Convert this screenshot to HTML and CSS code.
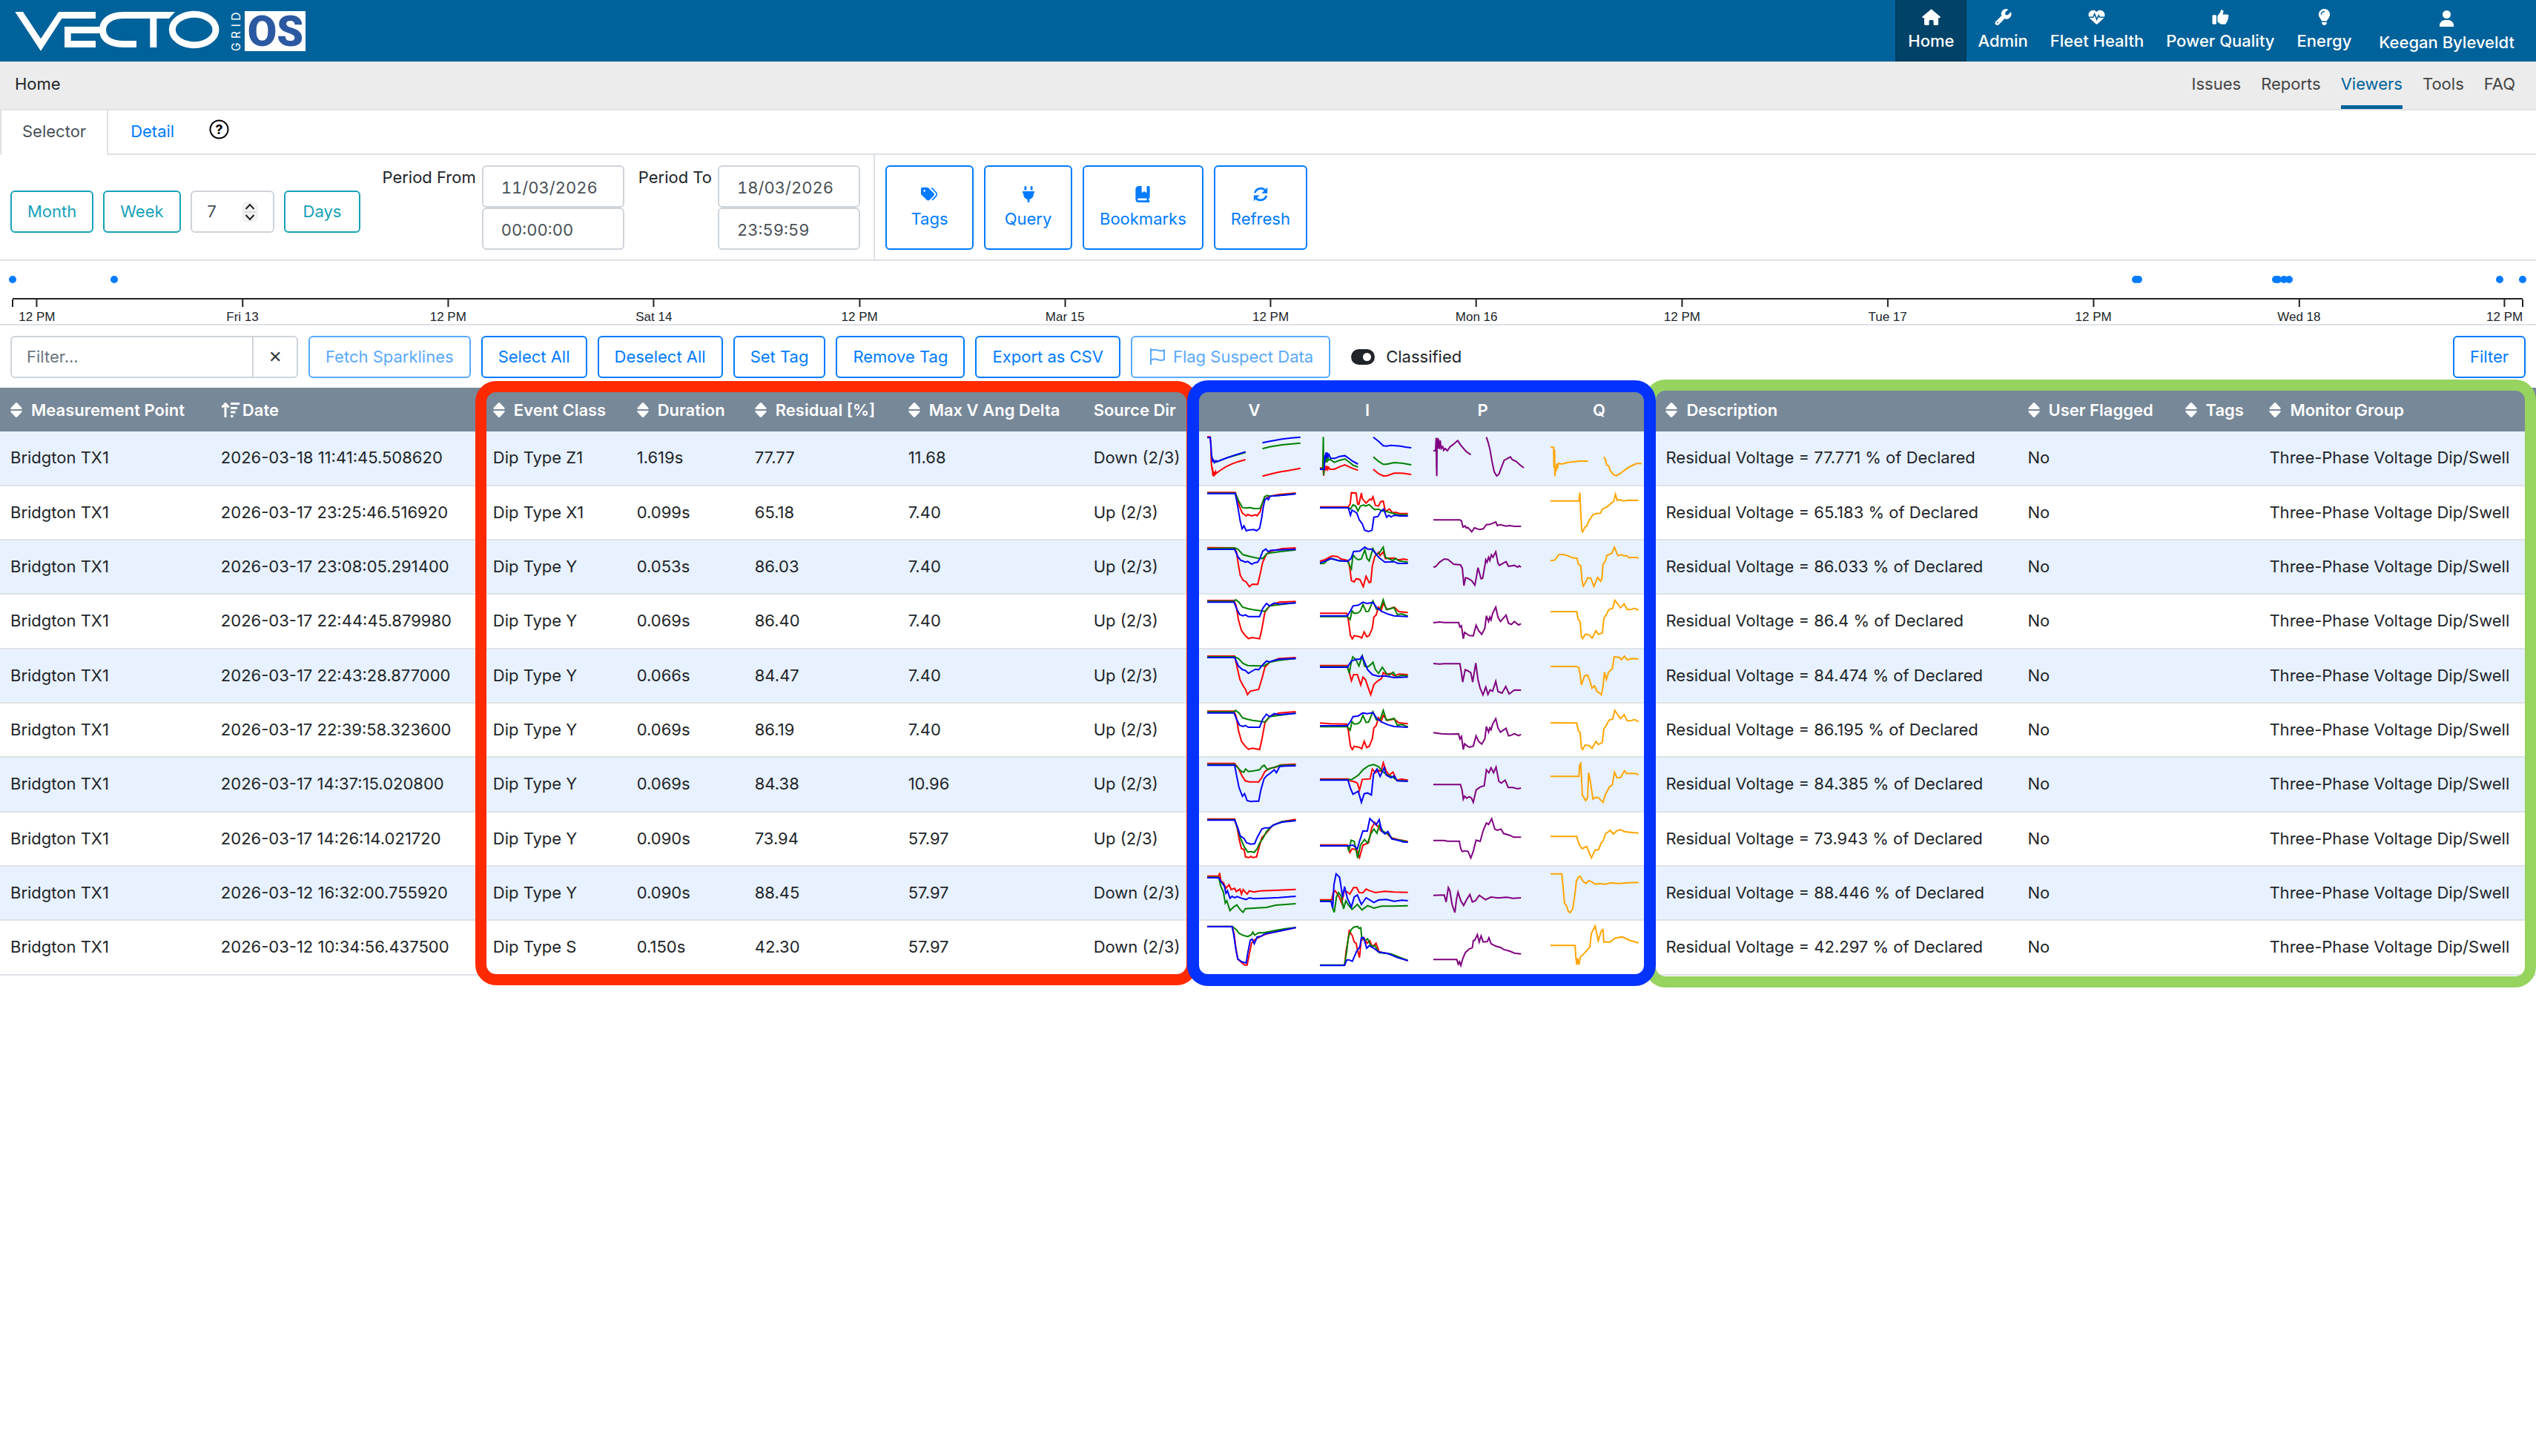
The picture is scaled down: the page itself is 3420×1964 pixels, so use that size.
FILE: index.html
```html
<!DOCTYPE html>
<html lang="en">
<head>
<meta charset="utf-8">
<title>Vecto Grid OS - Viewers</title>
<link rel="stylesheet" href="styles.css">
</head>
<body>
<svg class="defs" aria-hidden="true">
  <symbol id="sort" viewBox="0 0 16 20"><path d="M8 0Q9 0 9.600 1L15.200 7Q16.500 9 14.500 9H1.500Q-.5 9 .8 7L6.400 1Q7 0 8 0zM8 20Q9 20 9.600 19L15.200 13Q16.500 11 14.500 11H1.500Q-.5 11 .8 13L6.400 19Q7 20 8 20z"/></symbol>
</svg>
<header class="topbar">
  <a class="brand" href="#" aria-label="Vecto Grid OS">
    <svg class="logo" viewBox="0 0 1290 249">
      <g fill="#fff">
        <path d="M61 48H93L165 157L237 48H387V75H250L165 206z"/>
        <path d="M405 108H261V192H387V165H287V135H405z"/>
        <path d="M708 48H500C430 48 402 85 402 121C402 160 430 192 500 192H552V165H500C455 165 429 150 429 121C429 95 455 75 500 75H607V192H634V75H684z"/>
        <ellipse cx="785" cy="120" rx="88" ry="62" fill="none" stroke="#fff" stroke-width="27"/>
        <rect x="990" y="45" width="246" height="162"/>
        <text class="logo-grid" transform="translate(971 207) rotate(-90)" x="0 51 98 124" y="0">GRID</text>
      </g>
      <text class="logo-os" x="1001" y="187">OS</text>
    </svg>
  </a>
  <nav class="mainnav">
    <a class="on" href="#"><svg viewBox="0 0 25 22"><path d="M12.500 .2L24.600 10.600Q25.200 12 23.800 12.300H22V20.500Q22 22 20.500 22H16.500Q15.500 22 15.500 21V16.500Q15.500 15 14 15H11Q9.500 15 9.500 16.500V21Q9.500 22 8.500 22H4.500Q3 22 3 20.500V12.300H1.200Q-.2 12 .4 10.600z"/></svg>Home</a>
    <a href="#"><svg viewBox="0 0 512 512"><path fill-rule="evenodd" d="M352 320c88.400 0 160-71.600 160-160c0-15.300-2.200-30.100-6.200-44.200c-3.100-10.800-16.400-13.200-24.300-5.300l-76.800 76.800c-3 3-7.100 4.700-11.300 4.700H336c-8.800 0-16-7.200-16-16V118.600c0-4.200 1.700-8.300 4.700-11.300l76.800-76.800c7.900-7.900 5.400-21.200-5.300-24.300C382.100 2.200 367.300 0 352 0C263.600 0 192 71.600 192 160c0 19.100 3.400 37.500 9.500 54.500L19.900 396.100C7.200 408.800 0 426.100 0 444.100C0 481.600 30.400 512 67.900 512c18 0 35.300-7.200 48-19.900L297.500 310.500c17 6.200 35.400 9.500 54.500 9.500zM80 408a24 24 0 1 1 0 48 24 24 0 1 1 0-48z"/></svg>Admin</a>
    <a href="#"><svg viewBox="0 0 512 512"><path d="M47.600 300.400L228.300 469.100c7.500 7 17.400 10.900 27.700 10.900s20.200-3.900 27.700-10.900L464.400 300.400c30.400-28.300 47.600-68 47.600-109.500v-5.800c0-69.900-50.500-129.500-119.400-141C347 36.500 300.600 51.400 268 84L256 96 244 84c-32.600-32.600-79-47.500-124.600-39.900C50.500 55.600 0 115.200 0 185.100v5.800c0 41.500 17.200 81.200 47.600 109.500z"/><path class="pulse" d="M-10 262H145L190 160L260 330L318 205L350 262H522"/></svg>Fleet Health</a>
    <a href="#"><svg viewBox="0 0 512 512"><path d="M313.400 32.900c26 5.200 42.900 30.500 37.700 56.500l-2.300 11.400c-5.300 26.700-15.100 52.100-28.800 75.200H464c26.500 0 48 21.500 48 48c0 18.500-10.500 34.600-25.900 42.600C497 275.400 504 288.900 504 304c0 23.400-16.800 42.900-38.900 47.100c4.400 7.300 6.900 15.800 6.900 24.900c0 21.300-13.900 39.400-33.100 45.600c.7 3.300 1.100 6.800 1.100 10.400c0 26.500-21.500 48-48 48H294.500c-19 0-37.500-5.600-53.300-16.100l-38.500-25.700C176 420.400 160 390.400 160 358.300V320 272 247.100c0-29.200 13.300-56.700 36-75l7.400-5.900c26.500-21.200 44.600-51 51.200-84.200l2.300-11.400c5.200-26 30.500-42.900 56.500-37.700zM32 192H96c17.700 0 32 14.300 32 32V448c0 17.700-14.300 32-32 32H32c-17.700 0-32-14.300-32-32V224c0-17.700 14.300-32 32-32z"/></svg>Power Quality</a>
    <a href="#"><svg viewBox="0 0 384 512"><path fill-rule="evenodd" d="M272 384c9.600-31.900 29.500-59.100 49.200-86.200c5.200-7.100 10.400-14.200 15.400-21.400c19.800-28.500 31.400-63 31.400-100.300C368 78.800 289.200 0 192 0S16 78.800 16 176c0 37.300 11.600 71.900 31.400 100.300c5 7.200 10.200 14.300 15.400 21.400c19.800 27.100 39.700 54.400 49.200 86.200H272zM192 512c44.200 0 80-35.800 80-80V416H112v16c0 44.200 35.800 80 80 80zM112 176c0 8.800-7.200 16-16 16s-16-7.200-16-16c0-61.900 50.100-112 112-112c8.800 0 16 7.200 16 16s-7.200 16-16 16c-44.200 0-80 35.800-80 80z"/></svg>Energy</a>
    <a class="user" href="#"><svg viewBox="0 0 448 512"><circle cx="224" cy="128" r="128"/><path d="M178.300 304C79.800 304 0 383.800 0 482.300C0 498.700 13.300 512 29.700 512H418.300c16.400 0 29.700-13.300 29.700-29.700C448 383.800 368.200 304 269.700 304H178.300z"/></svg>Keegan Byleveldt</a>
  </nav>
</header>
<div class="subbar">
  <span class="crumb">Home</span>
  <nav class="subnav"><a href="#">Issues</a><a href="#">Reports</a><a class="on" href="#">Viewers</a><a href="#">Tools</a><a href="#">FAQ</a></nav>
</div>
<nav class="tabs">
  <a class="tab on" href="#">Selector</a>
  <a class="tab" href="#">Detail</a>
  <button class="help" type="button" aria-label="Help"><svg viewBox="0 0 27 27"><circle cx="13.500" cy="13.500" r="12"/><text x="13.500" y="20">?</text></svg></button>
</nav>
<form class="period">
  <div class="ranges">
    <button class="btn teal" type="button">Month</button>
    <button class="btn teal" type="button">Week</button>
    <div class="number">
      <input id="days" type="number" value="7" aria-label="Number of days">
      <svg viewBox="0 0 22 28"><rect width="22" height="28" rx="7"/><path class="mid" d="M3 14H19"/><path d="M5.500 10L11 4L16.500 10M5.500 18L11 24L16.500 18"/></svg>
    </div>
    <button class="btn teal wide" type="button">Days</button>
    <div class="moment">
      <label for="from">Period From</label>
      <div class="stack"><input id="from" type="text" value="11/03/2026"><input type="text" value="00:00:00" aria-label="Time from"></div>
    </div>
    <div class="moment">
      <label for="to">Period To</label>
      <div class="stack"><input id="to" type="text" value="18/03/2026"><input type="text" value="23:59:59" aria-label="Time to"></div>
    </div>
  </div>
  <div class="actions">
    <button class="btn tall" type="button"><svg viewBox="0 0 576 512"><path fill-rule="evenodd" d="M0 80V229.500c0 17 6.700 33.300 18.700 45.300l168 168c25 25 65.500 25 90.500 0L410.700 309.300c25-25 25-65.500 0-90.500l-168-168c-12-12-28.300-18.700-45.300-18.700H48C21.500 32 0 53.500 0 80zm112 32a32 32 0 1 1 0 64 32 32 0 1 1 0-64z"/><path class="edge" d="M345 50L485 195Q530 255 485 320L365 445"/></svg>Tags</button>
    <button class="btn tall" type="button"><svg viewBox="0 0 384 512"><path d="M96 0C78.300 0 64 14.300 64 32v96h64V32c0-17.700-14.300-32-32-32zM288 0c-17.700 0-32 14.300-32 32v96h64V32c0-17.700-14.300-32-32-32zM32 160c-17.700 0-32 14.300-32 32s14.300 32 32 32v32c0 77.400 55 142 128 156.800V480c0 17.700 14.300 32 32 32s32-14.300 32-32V412.800C297 398 352 333.400 352 256V224c17.700 0 32-14.300 32-32s-14.300-32-32-32H32z"/></svg>Query</button>
    <button class="btn tall" type="button"><svg viewBox="0 0 448 512"><path fill-rule="evenodd" d="M0 96C0 43 43 0 96 0h96V190.700c0 13.400 15.500 20.900 26 12.500L272 160l54 43.200c10.500 8.400 26 .9 26-12.500V0h64c17.700 0 32 14.300 32 32V352c0 17.700-14.300 32-32 32v64c17.700 0 32 14.300 32 32s-14.300 32-32 32H96c-53 0-96-43-96-96V96zM64 416c0 17.700 14.300 32 32 32H352V384H96c-17.700 0-32 14.300-32 32z"/></svg>Bookmarks</button>
    <button class="btn tall" type="button"><svg viewBox="0 0 24 24"><path class="arc" d="M3.500 10A9 9 0 0 1 19 6.500M20.500 14A9 9 0 0 1 5 17.500"/><path d="M22 2V10.500H13.500zM2 22V13.500H10.500z"/></svg>Refresh</button>
  </div>
</form>
<section class="timeline" aria-label="Event timeline">
  <div class="dots">
    <i style="left:0%"></i><i style="left:4.05%"></i><i style="left:84.58%"></i><i style="left:84.69%"></i><i style="left:90.17%"></i><i style="left:90.26%"></i><i style="left:90.5%"></i><i style="left:90.7%"></i><i style="left:99.09%"></i><i style="left:100%"></i>
  </div>
  <div class="axis">
    <span style="left:.97%">12 PM</span><span style="left:9.16%">Fri 13</span><span style="left:17.35%">12 PM</span><span style="left:25.55%">Sat 14</span><span style="left:33.74%">12 PM</span><span style="left:41.93%">Mar 15</span><span style="left:50.12%">12 PM</span><span style="left:58.32%">Mon 16</span><span style="left:66.51%">12 PM</span><span style="left:74.7%">Tue 17</span><span style="left:82.9%">12 PM</span><span style="left:91.09%">Wed 18</span><span style="left:99.28%">12 PM</span>
  </div>
</section>
<div class="toolbar">
  <div class="search"><input type="text" placeholder="Filter..." aria-label="Filter"><button type="button" aria-label="Clear filter">✕</button></div>
  <button class="btn" type="button" disabled>Fetch Sparklines</button>
  <button class="btn" type="button">Select All</button>
  <button class="btn" type="button">Deselect All</button>
  <button class="btn" type="button">Set Tag</button>
  <button class="btn" type="button">Remove Tag</button>
  <button class="btn" type="button">Export as CSV</button>
  <button class="btn flag" type="button" disabled><svg viewBox="0 0 20 22"><path d="M1 0V22M1 3Q5 1 10 2.500T19 2.500V15Q15 17 10 15T1 16"/></svg>Flag Suspect Data</button>
  <label class="toggle"><input type="checkbox" checked>Classified</label>
  <button class="btn last" type="button">Filter</button>
</div>
<div class="results">
<table>
  <colgroup><col class="c-point"><col class="c-date"><col class="c-class"><col class="c-dur"><col class="c-res"><col class="c-ang"><col class="c-dir"><col class="c-v"><col class="c-i"><col class="c-p"><col class="c-q"><col class="c-desc"><col class="c-flag"><col class="c-tags"><col></colgroup>
  <thead><tr>
    <th><button type="button"><svg class="sort"><use href="#sort"/></svg>Measurement Point</button></th>
    <th><button class="dated" type="button"><svg class="sorted" viewBox="0 0 25 20"><path d="M6 20V3M1.500 6.500L6 1.500L10.500 6.500M13 1.500H25M13 7.500H22M13 13H19.500M13 18.500H16.500"/></svg>Date</button></th>
    <th><button type="button"><svg class="sort"><use href="#sort"/></svg>Event Class</button></th>
    <th><button type="button"><svg class="sort"><use href="#sort"/></svg>Duration</button></th>
    <th><button type="button"><svg class="sort"><use href="#sort"/></svg>Residual [%]</button></th>
    <th><button type="button"><svg class="sort"><use href="#sort"/></svg>Max V Ang Delta</button></th>
    <th>Source Dir</th><th class="mid">V</th><th class="mid">I</th><th class="mid">P</th><th class="mid">Q</th>
    <th><button type="button"><svg class="sort"><use href="#sort"/></svg>Description</button></th>
    <th><button type="button"><svg class="sort"><use href="#sort"/></svg>User Flagged</button></th>
    <th><button type="button"><svg class="sort"><use href="#sort"/></svg>Tags</button></th>
    <th><button type="button"><svg class="sort"><use href="#sort"/></svg>Monitor Group</button></th>
  </tr></thead>
  <tbody>
  <tr><td>Bridgton TX1</td><td>2026-03-18 11:41:45.508620</td><td>Dip Type Z1</td><td>1.619s</td><td>77.77</td><td>11.68</td><td>Down (2/3)</td>
    <td><svg class="spark" viewBox="90 264 309 180" preserveAspectRatio="none"><polyline class="r" points="90,271 99,271 102,300 103,375 106,405 107,395 108,428 109,408 111,431 113,412 115,426 117,412 119,418 130,408 150,392 170,380 190,371 213,363"/><polyline class="r" points="267,430 295,421 320,413 350,407 389,398"/><polyline class="g" points="103,340 108,370 117,373 160,353 213,334"/><polyline class="g" points="267,319 290,311 330,303 389,296"/><polyline class="b" points="90,274 100,274 104,345 107,368 110,364 113,375 118,367 122,371 150,357 180,344 213,331"/><polyline class="b" points="267,295 290,289 330,280 360,275 389,272"/></svg></td>
    <td><svg class="spark" viewBox="452 264 309 180" preserveAspectRatio="none"><polyline class="r" points="452,397 462,397 464,428 467,388 468,408 470,389 472,405 474,388 477,403 480,394 484,402 498,402 515,392 532,384 550,395 574,406"/><polyline class="r" points="623,402 640,420 655,429 665,429 690,418 715,418 745,423"/><polyline class="g" points="452,400 461,400 463,271 464,425 467,350 470,375 472,350 475,374 477,352 480,365 485,362 498,374 515,366 532,360 545,372 558,385 574,393"/><polyline class="g" points="623,352 640,370 655,382 665,382 690,375 715,377 745,384"/><polyline class="b" points="452,402 466,402 468,345 469,365 471,334 473,355 476,334 478,350 481,343 486,357 500,358 515,350 532,347 545,358 556,369 574,381"/><polyline class="b" points="623,272 640,289 655,307 665,308 680,305 710,308 725,312 745,315"/></svg></td>
    <td><svg class="spark" viewBox="815 264 309 180" preserveAspectRatio="none"><polyline class="p" points="815,327 822,327 824,275 825,388 826,430 827,275 829,318 831,278 834,320 837,285 840,318 845,310 848,325 853,318 860,327 868,312 880,300 893,286 903,305 920,330 935,343"/><polyline class="p" points="985,272 991,295 997,325 1003,370 1010,412 1018,429 1025,422 1033,395 1042,366 1052,359 1062,352 1068,363 1080,370 1095,387 1105,396"/></svg></td>
    <td><svg class="spark" viewBox="1189 264 309 180" preserveAspectRatio="none"><polyline class="o" points="1189,313 1199,313 1200,395 1202,322 1203,430 1205,398 1207,410 1209,380 1211,400 1214,378 1225,381 1245,374 1280,369 1309,369"/><polyline class="o" points="1360,352 1365,362 1369,385 1376,389 1380,407 1392,425 1400,428 1412,420 1425,407 1445,390 1465,379 1481,379"/></svg></td>
    <td>Residual Voltage = 77.771 % of Declared</td><td>No</td><td></td><td>Three-Phase Voltage Dip/Swell</td></tr>
  <tr><td>Bridgton TX1</td><td>2026-03-17 23:25:46.516920</td><td>Dip Type X1</td><td>0.099s</td><td>65.18</td><td>7.40</td><td>Up (2/3)</td>
    <td><svg class="spark" viewBox="90 483 309 180" preserveAspectRatio="none"><polyline class="r" points="90,493 180,493 186,515 193,548 202,575 215,588 220,582 232,588 245,583 250,587 260,570 267,535 275,520 290,508 320,501 374,495"/><polyline class="g" points="90,496 180,496 190,525 203,554 215,556 228,554 240,558 260,557 267,535 274,510 282,505 290,508 320,505 374,497"/><polyline class="b" points="90,497 180,497 188,550 196,610 202,640 208,628 215,648 223,645 240,643 248,648 258,638 264,600 270,550 275,522 282,515 286,522 292,508 340,503 374,499"/></svg></td>
    <td><svg class="spark" viewBox="452 483 309 180" preserveAspectRatio="none"><polyline class="r" points="452,551 543,551 549,540 553,494 568,495 573,540 577,541 585,495 588,518 600,536 612,520 617,523 622,510 630,545 640,548 647,530 655,528 662,570 675,560 685,575 695,573 708,578 734,578"/><polyline class="g" points="452,554 543,554 550,560 558,543 566,547 574,568 582,548 592,543 598,548 610,542 620,555 628,562 640,560 650,568 660,568 680,575 700,582 734,584"/><polyline class="b" points="452,555 543,555 550,585 555,564 570,576 578,603 588,620 595,645 607,651 619,646 625,593 638,590 648,568 656,560 666,593 673,585 680,592 690,585 710,588 734,588"/></svg></td>
    <td><svg class="spark" viewBox="815 483 309 180" preserveAspectRatio="none"><polyline class="p" points="815,604 900,604 905,608 910,633 917,628 920,636 926,635 938,652 947,636 963,643 975,640 985,623 997,622 1015,612 1020,627 1030,623 1048,629 1060,627 1075,630 1096,630"/></svg></td>
    <td><svg class="spark" viewBox="1189 483 309 180" preserveAspectRatio="none"><polyline class="o" points="1189,527 1280,527 1283,493 1286,580 1289,645 1292,652 1300,632 1305,630 1313,605 1325,583 1335,578 1349,577 1355,560 1370,552 1382,538 1392,528 1397,500 1403,525 1412,522 1422,527 1440,524 1471,525"/></svg></td>
    <td>Residual Voltage = 65.183 % of Declared</td><td>No</td><td></td><td>Three-Phase Voltage Dip/Swell</td></tr>
  <tr><td>Bridgton TX1</td><td>2026-03-17 23:08:05.291400</td><td>Dip Type Y</td><td>0.053s</td><td>86.03</td><td>7.40</td><td>Up (2/3)</td>
    <td><svg class="spark" viewBox="90 702 309 180" preserveAspectRatio="none"><polyline class="r" points="90,716 178,717 184,735 190,785 196,828 205,848 215,855 225,874 235,864 252,865 260,822 268,775 280,742 295,730 330,720 374,717"/><polyline class="g" points="90,720 178,718 188,722 205,745 230,753 250,758 268,760 280,742 290,738 320,733 374,725"/><polyline class="b" points="90,723 178,723 188,752 198,768 205,770 212,775 220,772 233,783 240,778 252,775 260,758 268,730 278,722 285,732 295,727 320,725 374,723"/></svg></td>
    <td><svg class="spark" viewBox="452 702 309 180" preserveAspectRatio="none"><polyline class="r" points="452,771 468,765 490,750 508,752 520,762 543,768 548,800 553,850 562,855 568,842 580,845 591,874 600,832 610,858 615,855 620,790 628,752 640,735 645,748 655,733 662,760 690,758 705,766 720,762 734,766"/><polyline class="g" points="452,781 465,780 475,768 490,760 515,770 540,770 548,790 553,802 558,745 568,760 575,765 585,762 596,725 603,760 610,770 622,720 632,745 642,738 655,714 662,755 685,768 695,760 705,770 734,775"/><polyline class="b" points="452,778 470,770 485,760 510,768 540,772 552,760 560,732 580,730 596,714 605,722 618,722 628,735 640,755 660,775 690,773 702,780 734,780"/></svg></td>
    <td><svg class="spark" viewBox="815 702 309 180" preserveAspectRatio="none"><polyline class="p" points="815,795 822,793 835,775 850,762 862,764 880,783 902,786 908,800 913,870 918,838 925,840 938,850 948,868 953,835 958,797 968,842 973,840 980,790 983,765 987,775 992,755 996,768 1001,745 1006,755 1015,733 1022,778 1027,788 1040,778 1048,773 1056,792 1075,788 1085,795 1090,790 1096,795"/></svg></td>
    <td><svg class="spark" viewBox="1189 702 309 180" preserveAspectRatio="none"><polyline class="o" points="1189,769 1202,767 1215,745 1225,743 1240,747 1260,757 1274,759 1278,783 1286,790 1290,850 1294,872 1302,855 1308,838 1318,840 1328,873 1340,837 1350,852 1354,840 1357,785 1365,770 1370,747 1380,742 1386,738 1394,715 1405,748 1418,745 1425,750 1432,748 1440,757 1465,755 1471,760"/></svg></td>
    <td>Residual Voltage = 86.033 % of Declared</td><td>No</td><td></td><td>Three-Phase Voltage Dip/Swell</td></tr>
  <tr><td>Bridgton TX1</td><td>2026-03-17 22:44:45.879980</td><td>Dip Type Y</td><td>0.069s</td><td>86.40</td><td>7.40</td><td>Up (2/3)</td>
    <td><svg class="spark" viewBox="90 924 309 180" preserveAspectRatio="none"><polyline class="r" points="90,933 176,933 183,955 190,1010 200,1055 212,1075 222,1087 235,1083 258,1088 265,1050 275,980 290,955 320,940 374,937"/><polyline class="g" points="90,936 176,936 181,930 192,940 203,960 220,966 235,970 260,974 275,977 290,955 320,950 374,942"/><polyline class="b" points="90,940 176,940 184,965 194,990 205,995 212,991 222,998 258,998 268,965 280,945 290,955 305,943 320,947 374,943"/></svg></td>
    <td><svg class="spark" viewBox="452 924 309 180" preserveAspectRatio="none"><polyline class="r" points="452,985 538,985 543,1010 550,1075 556,1088 562,1075 580,1080 586,1085 594,1060 602,1080 610,1075 620,1045 625,1000 632,992 640,960 648,975 655,945 668,970 690,960 705,978 734,982"/><polyline class="g" points="452,998 540,998 549,1010 555,975 562,985 575,983 582,975 590,950 600,978 608,977 622,935 633,968 645,968 655,930 665,970 690,962 700,990 715,987 734,996"/><polyline class="b" points="452,995 540,995 550,975 558,955 575,952 590,940 603,945 622,941 635,963 650,977 670,988 690,995 734,998"/></svg></td>
    <td><svg class="spark" viewBox="815 924 309 180" preserveAspectRatio="none"><polyline class="p" points="815,1023 835,1020 850,1022 896,1022 900,1040 905,1035 911,1088 915,1062 922,1068 930,1075 943,1076 952,1033 960,1055 970,1070 980,1045 985,995 992,1018 996,1000 1000,1012 1005,985 1015,960 1022,1000 1030,1018 1048,992 1056,1025 1065,1030 1075,1018 1088,1032 1096,1027"/></svg></td>
    <td><svg class="spark" viewBox="1189 924 309 180" preserveAspectRatio="none"><polyline class="o" points="1189,978 1273,978 1278,1010 1284,1018 1288,1080 1292,1088 1300,1070 1313,1072 1322,1085 1335,1055 1342,1070 1355,1065 1360,1005 1368,990 1376,970 1388,965 1395,932 1405,948 1413,963 1425,947 1435,970 1445,970 1458,965 1471,972"/></svg></td>
    <td>Residual Voltage = 86.4 % of Declared</td><td>No</td><td></td><td>Three-Phase Voltage Dip/Swell</td></tr>
  <tr><td>Bridgton TX1</td><td>2026-03-17 22:43:28.877000</td><td>Dip Type Y</td><td>0.066s</td><td>84.47</td><td>7.40</td><td>Up (2/3)</td>
    <td><svg class="spark" viewBox="90 1143 309 180" preserveAspectRatio="none"><polyline class="r" points="90,1155 178,1155 185,1195 195,1250 205,1275 213,1290 219,1311 228,1297 255,1290 265,1248 275,1200 290,1180 320,1165 374,1161"/><polyline class="g" points="90,1158 178,1158 190,1165 205,1185 220,1193 255,1195 272,1195 290,1180 320,1172 374,1165"/><polyline class="b" points="90,1161 178,1161 190,1195 203,1210 212,1213 222,1225 235,1215 245,1208 255,1210 268,1190 280,1175 290,1178 305,1172 320,1168 374,1165"/></svg></td>
    <td><svg class="spark" viewBox="452 1143 309 180" preserveAspectRatio="none"><polyline class="r" points="452,1193 540,1193 547,1225 553,1255 560,1230 572,1230 583,1272 590,1240 598,1250 606,1280 615,1311 625,1270 638,1255 650,1245 655,1222 665,1230 680,1225 690,1235 705,1228 734,1230"/><polyline class="g" points="452,1198 540,1198 546,1225 551,1190 557,1158 567,1168 577,1195 588,1155 595,1195 603,1200 615,1190 622,1180 630,1210 640,1225 652,1200 665,1225 675,1232 687,1220 697,1240 715,1233 734,1235"/><polyline class="b" points="452,1200 540,1200 553,1175 570,1168 580,1168 587,1155 597,1185 605,1210 620,1230 640,1237 660,1235 690,1242 734,1240"/></svg></td>
    <td><svg class="spark" viewBox="815 1143 309 180" preserveAspectRatio="none"><polyline class="p" points="815,1185 835,1187 850,1186 900,1186 904,1215 909,1260 917,1210 926,1215 935,1222 941,1260 951,1183 958,1250 965,1285 974,1312 983,1280 990,1310 997,1292 1005,1297 1015,1257 1022,1298 1035,1305 1047,1278 1058,1308 1075,1292 1096,1293"/></svg></td>
    <td><svg class="spark" viewBox="1189 1143 309 180" preserveAspectRatio="none"><polyline class="o" points="1189,1197 1272,1197 1280,1203 1284,1230 1288,1272 1298,1235 1308,1232 1315,1255 1322,1285 1330,1275 1338,1298 1344,1302 1352,1312 1357,1280 1362,1220 1368,1250 1375,1220 1387,1205 1393,1158 1410,1160 1416,1170 1426,1155 1435,1170 1450,1165 1471,1167"/></svg></td>
    <td>Residual Voltage = 84.474 % of Declared</td><td>No</td><td></td><td>Three-Phase Voltage Dip/Swell</td></tr>
  <tr><td>Bridgton TX1</td><td>2026-03-17 22:39:58.323600</td><td>Dip Type Y</td><td>0.069s</td><td>86.19</td><td>7.40</td><td>Up (2/3)</td>
    <td><svg class="spark" viewBox="90 917 309 180" preserveAspectRatio="none"><polyline class="r" points="90,933 176,933 183,955 190,1010 200,1055 212,1075 222,1087 235,1083 258,1088 265,1050 275,980 290,955 320,940 374,935"/><polyline class="g" points="90,936 176,936 181,930 192,940 203,960 220,966 235,970 260,974 275,977 290,955 320,950 374,941"/><polyline class="b" points="90,940 176,940 184,965 194,990 205,995 212,991 222,998 258,998 268,965 280,945 290,955 305,943 320,947 374,942"/></svg></td>
    <td><svg class="spark" viewBox="452 917 309 180" preserveAspectRatio="none"><polyline class="r" points="452,981 485,984 538,985 543,1010 550,1075 556,1088 562,1075 580,1080 586,1085 594,1055 602,1080 610,1075 620,1045 625,1000 632,992 640,960 648,975 655,950 668,970 690,965 705,980 734,984"/><polyline class="g" points="452,996 540,996 549,1010 555,975 562,985 575,983 582,975 590,950 600,978 608,977 622,935 633,968 645,968 655,930 665,970 690,962 700,990 715,987 734,996"/><polyline class="b" points="452,992 540,992 550,975 558,955 575,952 590,940 603,943 622,939 635,963 650,977 670,988 690,995 734,998"/></svg></td>
    <td><svg class="spark" viewBox="815 917 309 180" preserveAspectRatio="none"><polyline class="p" points="815,1020 840,1024 860,1026 896,1025 900,1045 905,1035 911,1088 915,1065 922,1072 930,1079 943,1074 952,1033 960,1055 970,1066 980,1045 985,995 992,1018 996,1000 1000,1008 1005,985 1015,963 1022,1000 1030,1018 1048,1002 1056,1033 1065,1030 1075,1024 1088,1032 1096,1027"/></svg></td>
    <td><svg class="spark" viewBox="1189 917 309 180" preserveAspectRatio="none"><polyline class="o" points="1189,980 1273,981 1278,1010 1284,1020 1288,1080 1292,1088 1300,1070 1313,1072 1322,1083 1335,1055 1342,1068 1355,1060 1360,1005 1368,990 1376,970 1388,965 1395,930 1405,948 1413,963 1425,947 1435,972 1445,972 1458,967 1471,975"/></svg></td>
    <td>Residual Voltage = 86.195 % of Declared</td><td>No</td><td></td><td>Three-Phase Voltage Dip/Swell</td></tr>
  <tr><td>Bridgton TX1</td><td>2026-03-17 14:37:15.020800</td><td>Dip Type Y</td><td>0.069s</td><td>84.38</td><td>10.96</td><td>Up (2/3)</td>
    <td><svg class="spark" viewBox="90 384 309 180" preserveAspectRatio="none"><polyline class="r" points="90,392 178,392 190,412 202,443 212,463 225,467 255,467 265,450 275,425 290,412 310,408 325,398 374,395"/><polyline class="g" points="90,397 178,397 188,410 200,425 207,428 213,415 222,425 240,422 258,418 267,403 273,400 283,417 300,410 325,400 374,399"/><polyline class="b" points="90,400 178,400 184,440 192,490 203,525 210,515 218,543 230,547 240,545 255,545 262,500 272,455 280,443 292,432 305,418 312,430 322,405 340,403 374,402"/></svg></td>
    <td><svg class="spark" viewBox="452 384 309 180" preserveAspectRatio="none"><polyline class="r" points="452,455 542,455 550,463 565,467 572,472 579,500 588,457 613,455 620,415 630,430 640,420 648,425 655,390 665,425 675,440 686,427 698,460 715,456 734,460"/><polyline class="g" points="452,458 542,458 555,457 575,440 590,418 608,402 624,397 640,405 650,422 665,437 685,447 700,462 734,464"/><polyline class="b" points="452,460 542,460 549,490 558,517 575,505 585,550 594,515 605,512 617,520 624,435 635,415 645,445 658,410 665,440 680,450 690,443 700,463 734,464"/></svg></td>
    <td><svg class="spark" viewBox="815 384 309 180" preserveAspectRatio="none"><polyline class="p" points="815,478 902,478 907,500 911,537 915,525 922,533 930,527 937,532 943,550 952,500 965,488 978,483 985,418 993,430 1000,410 1008,430 1016,407 1025,465 1033,472 1045,460 1055,490 1070,490 1085,495 1096,492"/></svg></td>
    <td><svg class="spark" viewBox="1189 384 309 180" preserveAspectRatio="none"><polyline class="o" points="1189,445 1280,445 1282,400 1286,392 1291,520 1302,543 1308,530 1311,430 1316,460 1325,537 1332,530 1342,530 1357,550 1366,515 1378,487 1387,480 1394,428 1402,450 1413,450 1426,422 1433,433 1460,433 1471,438"/></svg></td>
    <td>Residual Voltage = 84.385 % of Declared</td><td>No</td><td></td><td>Three-Phase Voltage Dip/Swell</td></tr>
  <tr><td>Bridgton TX1</td><td>2026-03-17 14:26:14.021720</td><td>Dip Type Y</td><td>0.090s</td><td>73.94</td><td>57.97</td><td>Up (2/3)</td>
    <td><svg class="spark" viewBox="90 603 309 180" preserveAspectRatio="none"><polyline class="r" points="90,614 178,614 186,650 193,700 200,735 208,737 213,768 225,770 230,765 235,770 248,768 255,735 265,690 280,670 300,640 330,625 374,616"/><polyline class="g" points="90,617 178,617 188,655 196,690 208,725 220,748 232,746 240,750 250,735 258,712 270,690 280,665 300,640 330,625 374,620"/><polyline class="b" points="90,619 178,619 188,650 196,683 208,693 216,710 230,716 242,714 250,690 265,655 275,650 290,650 305,637 330,627 374,621"/></svg></td>
    <td><svg class="spark" viewBox="452 603 309 180" preserveAspectRatio="none"><polyline class="r" points="452,719 540,719 548,750 555,735 570,738 579,770 590,720 608,710 618,650 628,628 640,650 650,665 665,670 680,690 700,697 734,705"/><polyline class="g" points="452,722 540,722 545,745 552,700 562,705 573,773 582,720 595,697 605,712 615,675 625,655 635,672 642,640 655,665 672,675 685,695 720,703 734,708"/><polyline class="b" points="452,723 540,723 558,720 572,735 580,700 590,662 604,663 612,613 622,625 632,638 642,617 650,662 660,675 670,665 682,695 700,700 720,707 734,708"/></svg></td>
    <td><svg class="spark" viewBox="815 603 309 180" preserveAspectRatio="none"><polyline class="p" points="815,701 850,701 860,704 898,704 903,735 908,746 915,743 926,745 935,772 943,745 952,700 965,705 975,660 985,630 992,637 1002,613 1012,655 1020,660 1032,655 1040,673 1060,680 1072,688 1096,688"/></svg></td>
    <td><svg class="spark" viewBox="1189 603 309 180" preserveAspectRatio="none"><polyline class="o" points="1189,685 1273,685 1280,715 1290,735 1305,725 1320,772 1332,740 1343,738 1352,710 1357,705 1365,675 1380,660 1390,675 1402,662 1414,657 1425,665 1445,668 1471,671"/></svg></td>
    <td>Residual Voltage = 73.943 % of Declared</td><td>No</td><td></td><td>Three-Phase Voltage Dip/Swell</td></tr>
  <tr><td>Bridgton TX1</td><td>2026-03-12 16:32:00.755920</td><td>Dip Type Y</td><td>0.090s</td><td>88.45</td><td>57.97</td><td>Down (2/3)</td>
    <td><svg class="spark" viewBox="90 822 309 180" preserveAspectRatio="none"><polyline class="r" points="90,845 127,845 130,833 134,865 142,872 150,895 160,880 167,900 178,895 183,908 195,898 200,918 205,900 212,910 218,918 225,905 240,910 260,905 320,902 374,899"/><polyline class="g" points="90,850 127,850 133,885 142,910 148,955 153,945 163,985 175,970 185,962 195,980 205,992 212,977 240,975 280,972 310,963 374,957"/><polyline class="b" points="90,852 127,852 135,870 145,885 150,915 155,905 163,935 170,927 178,933 185,928 205,937 215,940 225,933 240,937 270,935 320,932 374,927"/></svg></td>
    <td><svg class="spark" viewBox="452 822 309 180" preserveAspectRatio="none"><polyline class="r" points="452,941 490,941 495,910 501,905 512,925 522,955 530,905 540,910 548,918 560,892 570,892 578,912 590,913 600,898 612,905 630,912 660,907 690,910 734,911"/><polyline class="g" points="452,945 488,945 493,975 498,992 505,930 512,912 520,925 528,978 535,945 545,965 555,980 572,960 587,982 605,965 625,975 650,967 690,967 734,965"/><polyline class="b" points="452,948 488,948 493,975 497,880 504,836 515,850 525,930 531,888 540,935 553,970 562,930 572,922 585,960 600,933 625,952 640,942 665,940 690,947 715,943 734,945"/></svg></td>
    <td><svg class="spark" viewBox="815 822 309 180" preserveAspectRatio="none"><polyline class="p" points="815,923 850,922 856,950 863,892 868,905 875,960 884,993 889,940 894,910 903,945 912,964 922,940 932,920 940,950 950,945 962,923 982,941 1000,930 1022,934 1050,931 1070,935 1096,933"/></svg></td>
    <td><svg class="spark" viewBox="1189 822 309 180" preserveAspectRatio="none"><polyline class="o" points="1189,836 1225,836 1230,900 1234,955 1240,965 1246,988 1252,993 1260,978 1266,930 1272,865 1278,850 1284,846 1294,868 1303,875 1312,863 1320,868 1332,878 1345,875 1365,878 1380,873 1410,875 1440,872 1471,871"/></svg></td>
    <td>Residual Voltage = 88.446 % of Declared</td><td>No</td><td></td><td>Three-Phase Voltage Dip/Swell</td></tr>
  <tr><td>Bridgton TX1</td><td>2026-03-12 10:34:56.437500</td><td>Dip Type S</td><td>0.150s</td><td>42.30</td><td>57.97</td><td>Down (2/3)</td>
    <td><svg class="spark" viewBox="90 1044 309 180" preserveAspectRatio="none"><polyline class="r" points="90,1052 170,1052 176,1080 182,1140 188,1185 200,1198 210,1208 218,1208 224,1170 232,1120 240,1108 250,1100 265,1090 280,1082 310,1073 374,1057"/><polyline class="g" points="90,1052 170,1052 183,1065 192,1080 205,1088 220,1093 232,1085 236,1075 242,1087 256,1077 270,1078 300,1070 340,1061 374,1056"/><polyline class="b" points="90,1053 170,1053 175,1085 182,1145 188,1183 200,1195 215,1200 220,1160 228,1108 234,1103 241,1122 250,1095 262,1092 275,1082 310,1074 374,1057"/></svg></td>
    <td><svg class="spark" viewBox="452 1044 309 180" preserveAspectRatio="none"><polyline class="r" points="452,1209 531,1209 536,1150 542,1110 546,1070 556,1090 562,1115 568,1120 573,1150 579,1178 584,1110 594,1100 603,1120 612,1110 620,1135 632,1120 642,1155 680,1165 734,1191"/><polyline class="g" points="452,1208 531,1208 537,1160 543,1098 552,1065 560,1055 573,1052 577,1060 583,1057 586,1095 597,1110 605,1102 615,1130 628,1130 642,1158 680,1163 734,1190"/><polyline class="b" points="452,1210 531,1210 538,1188 545,1187 556,1193 562,1175 570,1152 580,1135 585,1098 592,1097 602,1140 610,1130 625,1140 640,1155 670,1162 700,1178 734,1190"/></svg></td>
    <td><svg class="spark" viewBox="815 1044 309 180" preserveAspectRatio="none"><polyline class="p" points="815,1186 890,1186 895,1205 899,1195 903,1210 910,1180 918,1157 930,1143 940,1138 943,1110 948,1107 956,1085 962,1115 968,1090 975,1115 988,1113 993,1098 1000,1122 1015,1132 1030,1137 1040,1145 1060,1152 1075,1160 1096,1163"/></svg></td>
    <td><svg class="spark" viewBox="1189 1044 309 180" preserveAspectRatio="none"><polyline class="o" points="1189,1129 1268,1129 1270,1175 1273,1207 1276,1180 1280,1207 1285,1175 1298,1160 1315,1135 1320,1080 1332,1050 1342,1110 1352,1070 1357,1065 1360,1115 1380,1115 1395,1100 1418,1094 1440,1107 1471,1119"/></svg></td>
    <td>Residual Voltage = 42.297 % of Declared</td><td>No</td><td></td><td>Three-Phase Voltage Dip/Swell</td></tr>
  </tbody>
</table>
<div class="frame red"></div>
<div class="frame green"></div>
<div class="frame blue"></div>
</div>
</body>
</html>
```
FILE: styles.css
```css
* { box-sizing: border-box; }
body { margin: 0; min-height: 100vh; padding-bottom: 40px; background: #fff; color: #212529; font: 22px/32px Inter, "Liberation Sans", sans-serif; }
a { color: inherit; text-decoration: none; }
button, input { font: inherit; color: inherit; }
.defs { display: none; }

.topbar { display: flex; justify-content: space-between; height: 83px; background: #00629b; color: #fff; }
.brand, .logo { display: block; }
.logo { width: 430px; height: 83px; }
.logo-grid { font: 46px Inter, sans-serif; }
.logo-os { font: 900 172px Roboto, sans-serif; fill: #2b59a1; }
.mainnav { display: flex; font-weight: 500; padding-right: 14px; }
.mainnav a { display: flex; flex-direction: column; align-items: center; gap: 5px; padding: 12px 15px 0; }
.mainnav svg { height: 22px; width: 25px; fill: currentColor; }
.mainnav .on { background: #004268; border: 2px solid #003b5d; border-width: 0 2px 2px; }
.mainnav .user { padding: 14px 15px 0 22px; }
.pulse { fill: none; stroke: #00629b; stroke-width: 38px; }

.subbar { display: flex; justify-content: space-between; height: 66px; padding: 0 28px 0 20px; background: #ececec; border-bottom: 2px solid #dee2e6; }
.crumb { padding-top: 14px; }
.subnav { display: flex; gap: 27px; color: #444; }
.subnav a { padding-top: 14px; }
.subnav .on { color: #00629b; border-bottom: 5px solid #00629b; }

.tabs { display: flex; align-items: stretch; height: 60px; border-bottom: 2px solid #dee2e6; }
.tab { padding: 12px 30px; color: #007bff; }
.tab.on { color: #495057; background: #fff; border: 2px solid #dee2e6; border-width: 0 2px; padding: 12px 28px 14px; margin-bottom: -2px; }
.help { display: flex; padding: 12px 17px; border: 0; background: none; }
.help svg { width: 27px; height: 27px; fill: none; stroke: #000; stroke-width: 2px; }
.help text { font: 700 18px Inter, sans-serif; fill: #000; stroke: none; text-anchor: middle; }

.btn { height: 57px; padding: 0 21px; border: 2px solid #007bff; border-radius: 6px; background: #fff; color: #007bff; white-space: nowrap; }
.btn.teal { color: #17a2b8; border-color: #17a2b8; }
.btn.wide { padding: 0 24px; }
.btn:disabled { color: #59a9ff; border-color: #59a9ff; }
.period { display: flex; height: 143px; border-bottom: 2px solid #dee2e6; }
.ranges { display: flex; align-items: center; gap: 13px; padding: 0 18px 0 14px; border-right: 2px solid #dee2e6; }
.ranges input { display: block; height: 57px; border: 2px solid #ced4da; border-radius: 6px; padding: 4px 24px 0; background: #fff; color: #495057; font-variant-numeric: tabular-nums; }
.ranges .teal, .number { margin-top: 11px; }
.number { position: relative; width: 113px; }
.ranges .number input { width: 100%; padding: 0 20px; appearance: textfield; }
.number svg { position: absolute; right: 22px; top: 15px; width: 22px; height: 28px; fill: none; stroke: #222; stroke-width: 2px; }
.number rect { fill: #f2f2f2; stroke: none; }
.number .mid { stroke: #ddd; }
.moment { display: flex; gap: 8px; align-items: flex-start; padding-left: 16px; }
.moment + .moment { padding-left: 6px; }
.stack { width: 192px; }
.stack input { width: 100%; }
.actions { display: flex; align-items: center; gap: 14px; padding-left: 14px; }
.tall { display: flex; flex-direction: column; align-items: center; justify-content: center; gap: 6px; height: 114px; min-width: 119px; padding-top: 2px; }
.tall svg { width: 24px; height: 22px; fill: currentColor; }
.tall .edge { fill: none; stroke: currentColor; stroke-width: 40px; }
.tall .arc { fill: none; stroke: currentColor; stroke-width: 3px; }

.timeline { height: 87px; padding: 20px 18px 0 17px; border-bottom: 2px solid #dee2e6; }
.dots { position: relative; height: 30px; }
.dots i { position: absolute; width: 10px; height: 10px; margin-left: -5px; border-radius: 5px; background: #007bff; }
.axis { position: relative; height: 12px; border-top: 2px solid #222; }
.axis::after { content: ""; position: absolute; inset: 0 -1px; border: 2px solid #222; border-width: 0 2px; }
.axis span { position: absolute; top: 0; display: flex; flex-direction: column; align-items: center; transform: translateX(-50%); white-space: nowrap; font: 17px/20px "Liberation Sans", sans-serif; }
.axis span::before { content: ""; width: 2px; height: 10px; margin-bottom: 4px; background: #222; }

.toolbar { display: flex; align-items: center; gap: 14px; height: 84px; padding: 0 14px; }
.search { display: flex; width: 388px; height: 57px; border: 2px solid #ced4da; border-radius: 6px; }
.search input { flex: 1; min-width: 0; border: 0; padding: 0 20px; background: none; }
.search input::placeholder { color: #6c757d; opacity: 1; }
.search button { width: 60px; border: 0; border-left: 2px solid #ced4da; background: none; color: #343a40; padding: 0; }
.flag { display: flex; align-items: center; gap: 11px; padding-left: 24px; }
.flag svg { width: 20px; height: 22px; fill: none; stroke: currentColor; stroke-width: 2px; }
.toggle { display: flex; align-items: center; gap: 15px; padding-left: 14px; }
.toggle input { appearance: none; display: flex; justify-content: flex-end; align-items: center; width: 32px; height: 21px; margin: 0; padding: 5px; border-radius: 11px; background: #212529; }
.toggle input::before { content: ""; width: 11px; height: 11px; border-radius: 6px; background: #fff; }
.last { margin-left: auto; }

.results { position: relative; }
table { width: 100%; table-layout: fixed; border-collapse: separate; border-spacing: 0; }
.c-point { width: 8.3%; } .c-date { width: 10.73%; } .c-class { width: 5.67%; } .c-dur { width: 4.65%; }
.c-res { width: 6.05%; } .c-ang { width: 7.31%; } .c-dir { width: 4.47%; } .c-v { width: 4.45%; }
.c-i { width: 4.47%; } .c-p { width: 4.62%; } .c-q { width: 4.56%; } .c-desc { width: 14.27%; }
.c-flag { width: 6.2%; } .c-tags { width: 3.33%; }
th, td { padding: 0 0 0 14px; text-align: left; white-space: nowrap; }
th { height: 59px; background: #778899; color: #fff; font-weight: 600; }
th.mid { padding: 0 14px 0 18px; text-align: center; }
th button { display: flex; align-items: center; gap: 12px; padding: 0; border: 0; background: none; font-weight: 600; }
th .dated { gap: 4px; }
.sort { width: 16px; height: 20px; fill: #fff; }
.sorted { width: 25px; height: 20px; fill: none; stroke: #fff; stroke-width: 3px; }
td { height: 73px; padding-bottom: 2px; border-bottom: 2px solid #dee2e6; }
tr:nth-child(3n+1) td { height: 74px; }
tbody tr:nth-child(odd) { background: #e7f1ff; }
.spark { display: block; width: 130px; height: 60px; overflow: visible; }
.spark polyline { fill: none; stroke-width: 2px; vector-effect: non-scaling-stroke; }
.r { stroke: #f00; } .g { stroke: #008000; } .b { stroke: #00f; } .p { stroke: #800080; } .o { stroke: #ffa500; }

.frame { position: absolute; border: 15px solid; border-radius: 28px; pointer-events: none; }
.red { left: 18.74%; width: 28.48%; top: -9px; bottom: -13px; border-color: #ff2a00; }
.blue { left: 46.81%; width: 18.48%; top: -10px; bottom: -14px; border-width: 16px; border-color: #0433ff; }
.green { left: 64.85%; right: 0; top: -11px; bottom: -16px; border-color: #96d35f; }
```
